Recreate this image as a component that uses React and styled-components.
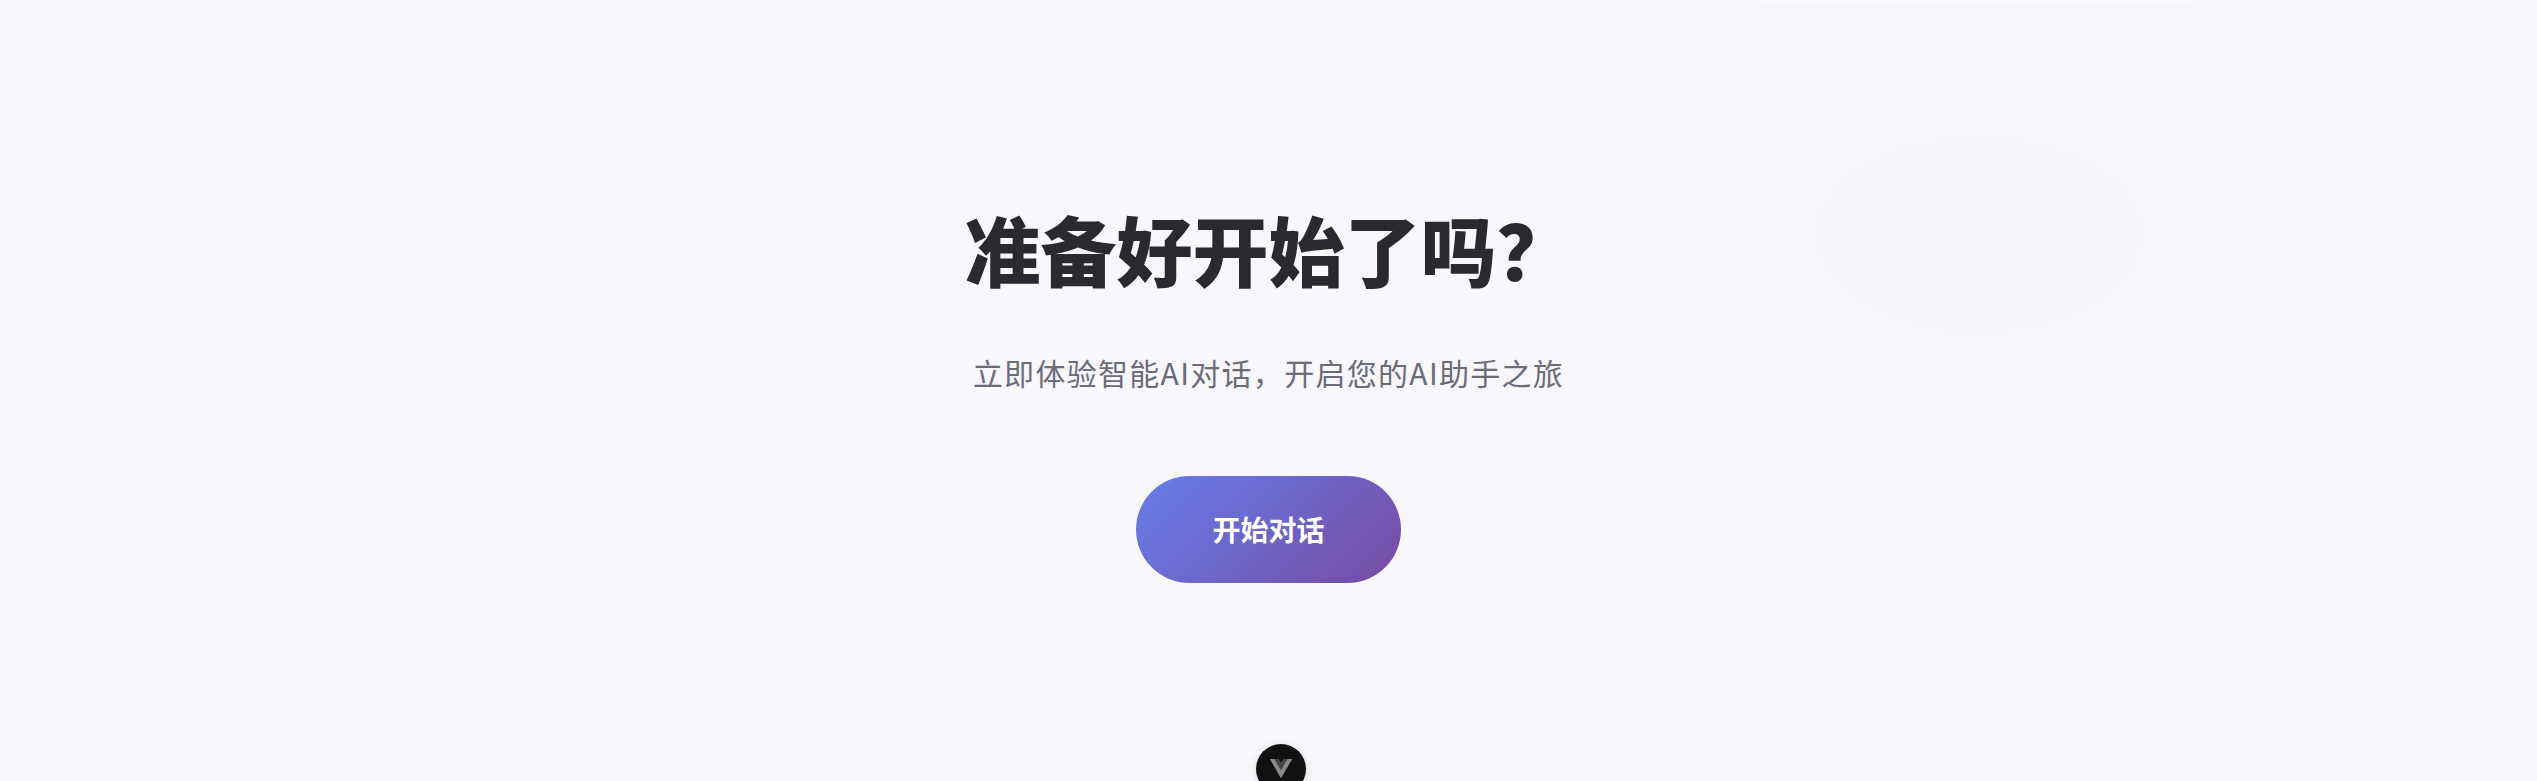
import React from 'react';
import styled, { createGlobalStyle } from 'styled-components';

const GlobalStyle = createGlobalStyle`
  html, body {
    margin: 0;
    padding: 0;
    background: #f7f7fc;
  }
  body {
    font-family: "Noto Sans CJK SC", "Noto Sans", sans-serif;
  }
  * {
    box-sizing: border-box;
  }
`;

const Section = styled.section`
  min-height: 100vh;
  display: flex;
  flex-direction: column;
  align-items: center;
  justify-content: center;
  padding-top: 3px;
  border-top: 1px solid #fcfcfe;
  background:
    radial-gradient(ellipse 700px 420px at 78% 30%, rgba(240, 238, 248, 0.35), transparent 70%),
    radial-gradient(ellipse 600px 300px at 20% 95%, rgba(252, 252, 255, 0.4), transparent 70%),
    #f7f7fc;
  text-align: center;
`;

const Title = styled.h2`
  margin: 0 0 55px;
  font-size: 76px;
  line-height: 92px;
  font-weight: 900;
  color: #2a2a2e;
`;

const Subtitle = styled.p`
  margin: 0 0 80px;
  font-size: 30px;
  line-height: 47px;
  letter-spacing: 1.3px;
  font-weight: 400;
  color: #6c6c78;
`;

const StartButton = styled.button`
  border: none;
  cursor: pointer;
  padding: 36px 76px;
  border-radius: 60px;
  font-family: inherit;
  font-size: 28px;
  line-height: 35px;
  font-weight: 700;
  color: #ffffff;
  background: linear-gradient(135deg, #667eea 0%, #764ba2 100%);
`;

const DevtoolsPill = styled.div`
  position: fixed;
  left: calc(50% + 12px);
  bottom: -13px;
  transform: translateX(-50%);
  width: 50px;
  height: 50px;
  border-radius: 25px;
  background: #111111;
  box-shadow: 0 2px 8px rgba(0, 0, 0, 0.15);
  display: flex;
  justify-content: center;
  padding-top: 15px;
`;

const VueMark = () => (
  <svg width="22" height="19" viewBox="0 0 256 221">
    <path d="M204.8 0H256L128 220.8 0 0h97.92L128 51.2 157.44 0h47.36Z" fill="#8a8a8a" />
    <path d="m0 0 128 220.8L256 0h-51.2L128 132.48 50.56 0H0Z" fill="#8a8a8a" />
    <path d="M50.56 0 128 133.12 204.8 0h-47.36L128 51.2 97.92 0H50.56Z" fill="#454545" />
  </svg>
);

export default function App() {
  return (
    <>
      <GlobalStyle />
      <Section>
        <Title>准备好开始了吗？</Title>
        <Subtitle>立即体验智能AI对话，开启您的AI助手之旅</Subtitle>
        <StartButton>开始对话</StartButton>
      </Section>
      <DevtoolsPill>
        <VueMark />
      </DevtoolsPill>
    </>
  );
}
